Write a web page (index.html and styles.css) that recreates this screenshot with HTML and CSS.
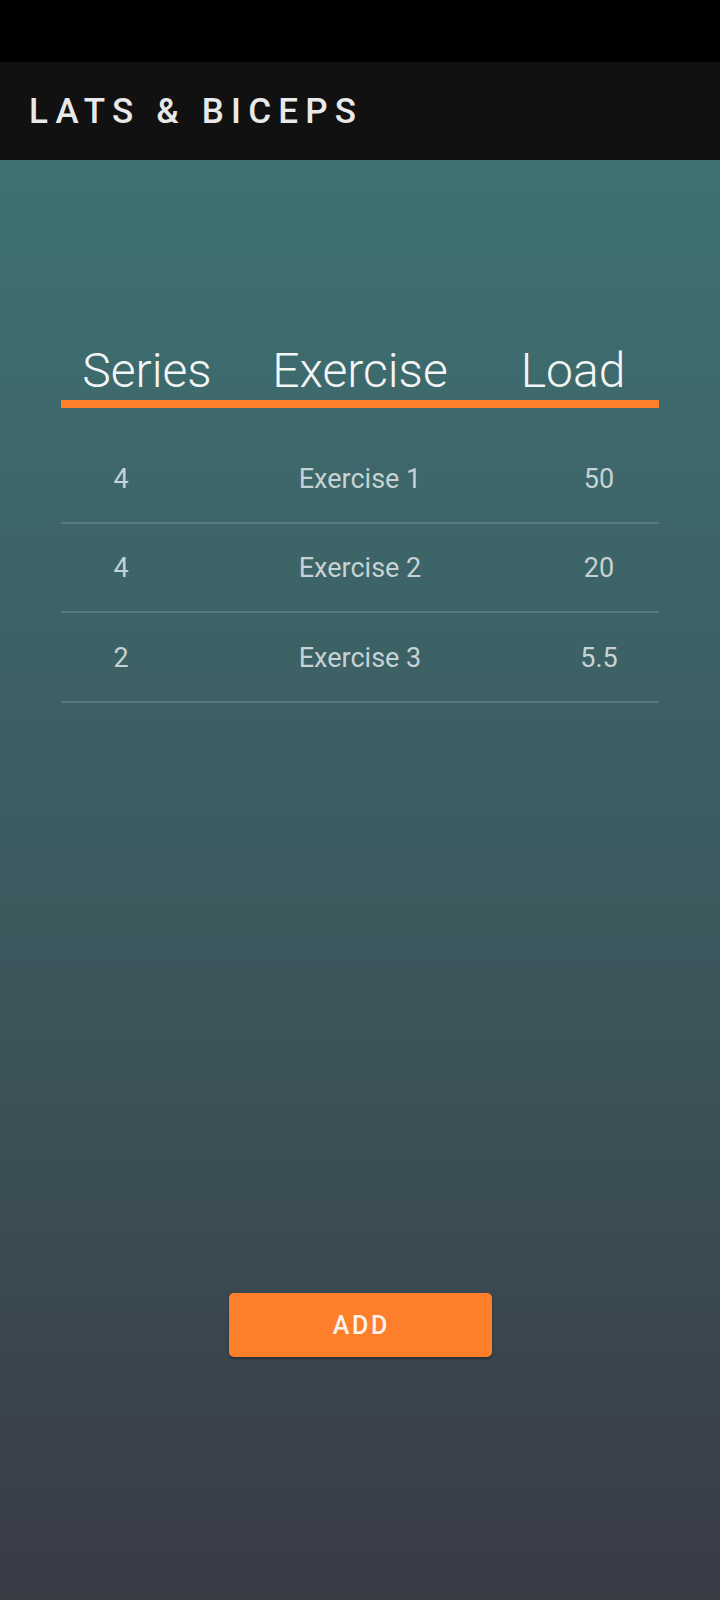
FILE: index.html
```html
<!DOCTYPE html>
<html>
<head>
<meta charset="utf-8">
<link rel="stylesheet" href="styles.css">
</head>
<body>
<div class="app">
  <div class="status-bar"></div>
  <header class="top-bar">
    <h1 class="title">LATS &amp; BICEPS</h1>
  </header>
  <main class="content">
    <div class="table-head">
      <span>Series</span>
      <span>Exercise</span>
      <span>Load</span>
    </div>
    <div class="rows">
      <div class="row"><span>4</span><span>Exercise 1</span><span>50</span></div>
      <div class="row"><span>4</span><span>Exercise 2</span><span>20</span></div>
      <div class="row"><span>2</span><span>Exercise 3</span><span>5.5</span></div>
    </div>
    <button class="add-btn">ADD</button>
  </main>
</div>
</body>
</html>
```
FILE: styles.css
```css
* { box-sizing: border-box; }
html, body { margin: 0; padding: 0; }
body {
  width: 720px;
  height: 1600px;
  font-family: Roboto, "Noto Sans", sans-serif;
  background: #393b45;
}
.app {
  display: flex;
  flex-direction: column;
  height: 1600px;
}
.status-bar {
  height: 62px;
  background: #000;
  flex: none;
}
.top-bar {
  height: 98px;
  flex: none;
  background: #111111;
  display: flex;
  align-items: center;
  padding-left: 29px;
}
.title {
  margin: 0;
  font-size: 35px;
  font-weight: 500;
  letter-spacing: 7.2px;
  color: #e9e9e9;
  line-height: 1;
}
.content {
  flex: 1;
  display: flex;
  flex-direction: column;
  padding: 182px 61px 243px 61px;
  background: linear-gradient(to bottom, #3e7172 0%, #3c5a5f 50%, #393b45 100%);
}
.table-head {
  display: grid;
  grid-template-columns: 172px 1fr 172px;
  height: 66px;
  border-bottom: 8px solid #fd7f2c;
  font-size: 48px;
  font-weight: 300;
  line-height: 57px;
  color: #f4f6f6;
  text-align: center;
}
.rows {
  margin-top: 26px;
  display: flex;
  flex-direction: column;
}
.row {
  display: grid;
  grid-template-columns: 120px 1fr 120px;
  align-items: center;
  height: 89.5px;
  padding-top: 2px;
  border-bottom: 2px solid rgba(255, 255, 255, 0.14);
  font-size: 27px;
  color: #c6d2d3;
  text-align: center;
}
.add-btn {
  margin-top: auto;
  align-self: center;
  width: 263px;
  height: 64px;
  border: none;
  border-radius: 5px;
  background: #fd7f2c;
  color: #fbf3ec;
  font-family: Roboto, "Noto Sans", sans-serif;
  font-size: 25px;
  font-weight: 500;
  letter-spacing: 2.6px;
  padding: 0 0 0 2.6px;
  box-shadow: 0 2px 3px rgba(0, 0, 0, 0.35);
}
```
